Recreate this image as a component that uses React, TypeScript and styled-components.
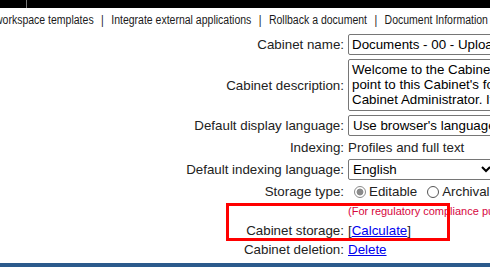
import styled, { createGlobalStyle } from 'styled-components';

const GlobalStyle = createGlobalStyle`
  body {
    margin: 0;
    background: #fff;
    font-family: 'Liberation Sans', Arial, sans-serif;
    color: #222;
    overflow: hidden;
  }
`;

const Page = styled.div`
  position: relative;
  width: 490px;
  height: 267px;
  overflow: hidden;
  display: flex;
  flex-direction: column;
`;

const TopBar = styled.div`
  height: 8px;
  background: #000;
  display: flex;
  flex-shrink: 0;
`;

const TopTab = styled.div`
  width: 26px;
  border-right: 1px solid #7a7a7a;
`;

// the nav font in the original is a narrow sans; squeeze Arial to match
const Nav = styled.nav`
  height: 24px;
  margin-left: -5px;
  display: flex;
  align-items: center;
  white-space: nowrap;
  font-family: 'Liberation Sans', Arial, sans-serif;
  font-size: 12px;
  color: #1a1a1a;
  flex-shrink: 0;
  transform: scaleX(0.875);
  transform-origin: left center;
`;

const NavItem = styled.span``;

const NavSep = styled.span`
  margin: 0 8.5px;
`;

const Form = styled.div`
  display: grid;
  grid-template-columns: 344px 400px;
  column-gap: 4px;
  row-gap: 4px;
  align-items: center;
  margin-top: 2px;
  font-size: 13.33px;
`;

const Label = styled.div`
  text-align: right;
  white-space: nowrap;
`;

const Value = styled.div`
  display: flex;
  align-items: center;
  white-space: nowrap;
  gap: 4px;
`;

const TextInput = styled.input`
  width: 300px;
  height: 21px;
  box-sizing: border-box;
  border: 1px solid #767676;
  border-radius: 2px;
  padding: 1px 3px;
  font-family: 'Liberation Sans', Arial, sans-serif;
  font-size: 13.33px;
  color: #000;
`;

const TextArea = styled.textarea`
  width: 300px;
  height: 52px;
  box-sizing: border-box;
  border: 1px solid #767676;
  border-radius: 2px;
  padding: 2px 3px;
  font-family: 'Liberation Sans', Arial, sans-serif;
  font-size: 13.33px;
  line-height: 15px;
  color: #000;
  resize: none;
  white-space: pre;
  overflow: hidden;
`;

const Select = styled.select<{ $width: number }>`
  width: ${(p) => p.$width}px;
  height: 21px;
  border: 1px solid #767676;
  border-radius: 2px;
  font-family: 'Liberation Sans', Arial, sans-serif;
  font-size: 13.33px;
  color: #000;
  background: #fff;
`;

const RadioLabel = styled.label`
  display: inline-flex;
  align-items: center;
`;

const Radio = styled.input`
  appearance: none;
  width: 12px;
  height: 12px;
  margin: 0 3px 0 6px;
  box-sizing: border-box;
  border: 1px solid #555;
  border-radius: 50%;
  background: #fff;

  &:checked {
    border-color: #8a8a8a;
    background: radial-gradient(circle, #8a8a8a 0 3.2px, #fff 3.7px);
  }
`;

const Note = styled.div`
  grid-column: 2;
  font-size: 11px;
  line-height: 16px;
  color: #d6063e;
  white-space: nowrap;
`;

const Link = styled.a`
  color: #0000ee;
  text-decoration: underline;
`;

const Highlight = styled.div`
  position: absolute;
  left: 226px;
  top: 203px;
  width: 224px;
  height: 38px;
  box-sizing: border-box;
  border: 3px solid #ff0000;
  pointer-events: none;
`;

const Footer = styled.div`
  margin-top: auto;
  height: 4px;
  background: #2b5a8c;
  flex-shrink: 0;
`;

const navLinks = [
  'workspace templates',
  'Integrate external applications',
  'Rollback a document',
  'Document Information',
];

const description =
  "Welcome to the Cabinet home page. This is the starting\npoint to this Cabinet's folders and documents. Contact the\nCabinet Administrator. If you need access to more content.";

export default function App() {
  return (
    <>
      <GlobalStyle />
      <Page>
        <TopBar>
          <TopTab />
        </TopBar>
        <Nav>
          {navLinks.map((item, i) => (
            <span key={item}>
              {i > 0 && <NavSep>|</NavSep>}
              <NavItem>{item}</NavItem>
            </span>
          ))}
        </Nav>
        <Form>
          <Label>Cabinet name:</Label>
          <Value>
            <TextInput defaultValue="Documents - 00 - Uploads" />
          </Value>

          <Label>Cabinet description:</Label>
          <Value>
            <TextArea defaultValue={description} rows={3} />
          </Value>

          <Label>Default display language:</Label>
          <Value>
            <Select $width={300} defaultValue="browser">
              <option value="browser">Use browser's language</option>
            </Select>
          </Value>

          <Label>Indexing:</Label>
          <Value>Profiles and full text</Value>

          <Label>Default indexing language:</Label>
          <Value>
            <Select $width={147} defaultValue="en">
              <option value="en">English</option>
            </Select>
          </Value>

          <Label>Storage type:</Label>
          <Value>
            <RadioLabel>
              <Radio type="radio" name="storage" defaultChecked disabled />
              Editable
            </RadioLabel>
            <RadioLabel>
              <Radio type="radio" name="storage" disabled />
              Archival
            </RadioLabel>
          </Value>

          <Note>(For regulatory compliance purposes, this cannot be changed)</Note>

          <Label>Cabinet storage:</Label>
          <Value>
            <span>
              [<Link href="#">Calculate</Link>]
            </span>
          </Value>

          <Label>Cabinet deletion:</Label>
          <Value>
            <Link href="#">Delete</Link>
          </Value>
        </Form>
        <Footer />
        <Highlight />
      </Page>
    </>
  );
}
